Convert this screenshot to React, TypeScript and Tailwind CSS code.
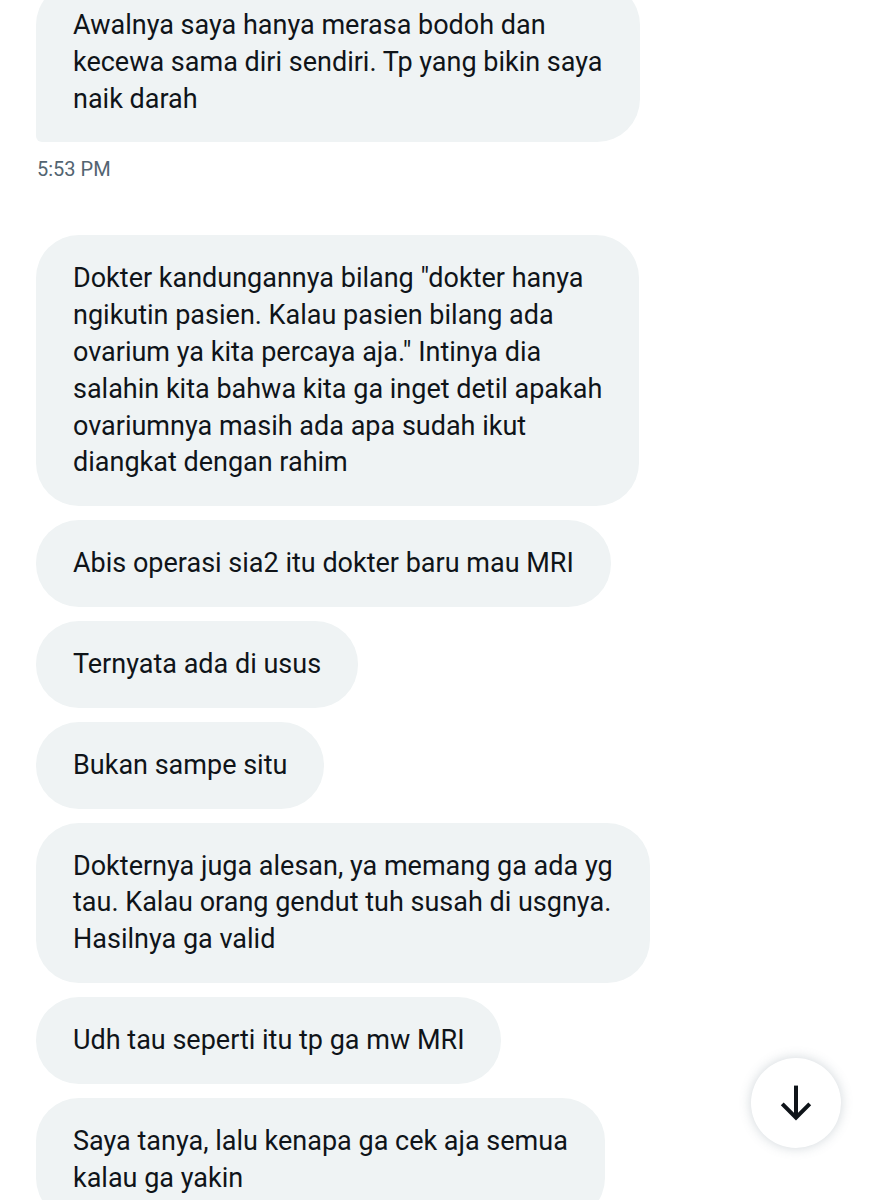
import React from 'react';

const messages: { lines: string[]; last?: boolean }[] = [
  { lines: ['Dokter kandungannya bilang "dokter hanya', 'ngikutin pasien. Kalau pasien bilang ada', 'ovarium ya kita percaya aja." Intinya dia', 'salahin kita bahwa kita ga inget detil apakah', 'ovariumnya masih ada apa sudah ikut', 'diangkat dengan rahim'] },
  { lines: ['Abis operasi sia2 itu dokter baru mau MRI'] },
  { lines: ['Ternyata ada di usus'] },
  { lines: ['Bukan sampe situ'] },
  { lines: ['Dokternya juga alesan, ya memang ga ada yg', 'tau. Kalau orang gendut tuh susah di usgnya.', 'Hasilnya ga valid'] },
  { lines: ['Udh tau seperti itu tp ga mw MRI'] },
  { lines: ['Saya tanya, lalu kenapa ga cek aja semua', 'kalau ga yakin'] },
];

const Bubble: React.FC<{ lines: string[]; last?: boolean }> = ({ lines, last }) => (
  <div
    className={`w-fit bg-[#eff3f4] px-[37px] py-[25px] text-[27px] leading-[36.8px] text-[#0f1419] whitespace-nowrap ${
      last ? 'rounded-[43px] rounded-bl-[6px]' : 'rounded-[43px]'
    }`}
  >
    {lines.map((l, i) => (
      <div key={i}>{l}</div>
    ))}
  </div>
);

const App: React.FC = () => {
  return (
    <div className="relative w-[886px] h-[1200px] overflow-hidden bg-white" style={{ fontFamily: 'Roboto, "Liberation Sans", sans-serif' }}>
      <div className="flex flex-col pl-[36px] -mt-[18px]">
        <Bubble lines={['Awalnya saya hanya merasa bodoh dan', 'kecewa sama diri sendiri. Tp yang bikin saya', 'naik darah']} last />
        <div className="mt-[13px] text-[20px] leading-[28px] text-[#536471] pl-[1px]">5:53 PM</div>

        <div className="flex flex-col gap-[14px] mt-[52px]">
          {messages.map((m, i) => (
            <Bubble key={i} lines={m.lines} last={m.last} />
          ))}
        </div>
      </div>

      {/* scroll to bottom */}
      <button className="absolute left-[751px] top-[1058px] w-[90px] h-[90px] rounded-full bg-white flex items-center justify-center shadow-[0_0_12px_rgba(101,119,134,0.3)]">
        <svg width="44" height="44" viewBox="0 0 24 24" fill="none" stroke="#0f1419" strokeWidth="2.2" strokeLinecap="butt">
          <path d="M12 2.5v17.5" />
          <path d="M4.5 12.5l7.5 7.5 7.5-7.5" />
        </svg>
      </button>
    </div>
  );
};

export default App;
